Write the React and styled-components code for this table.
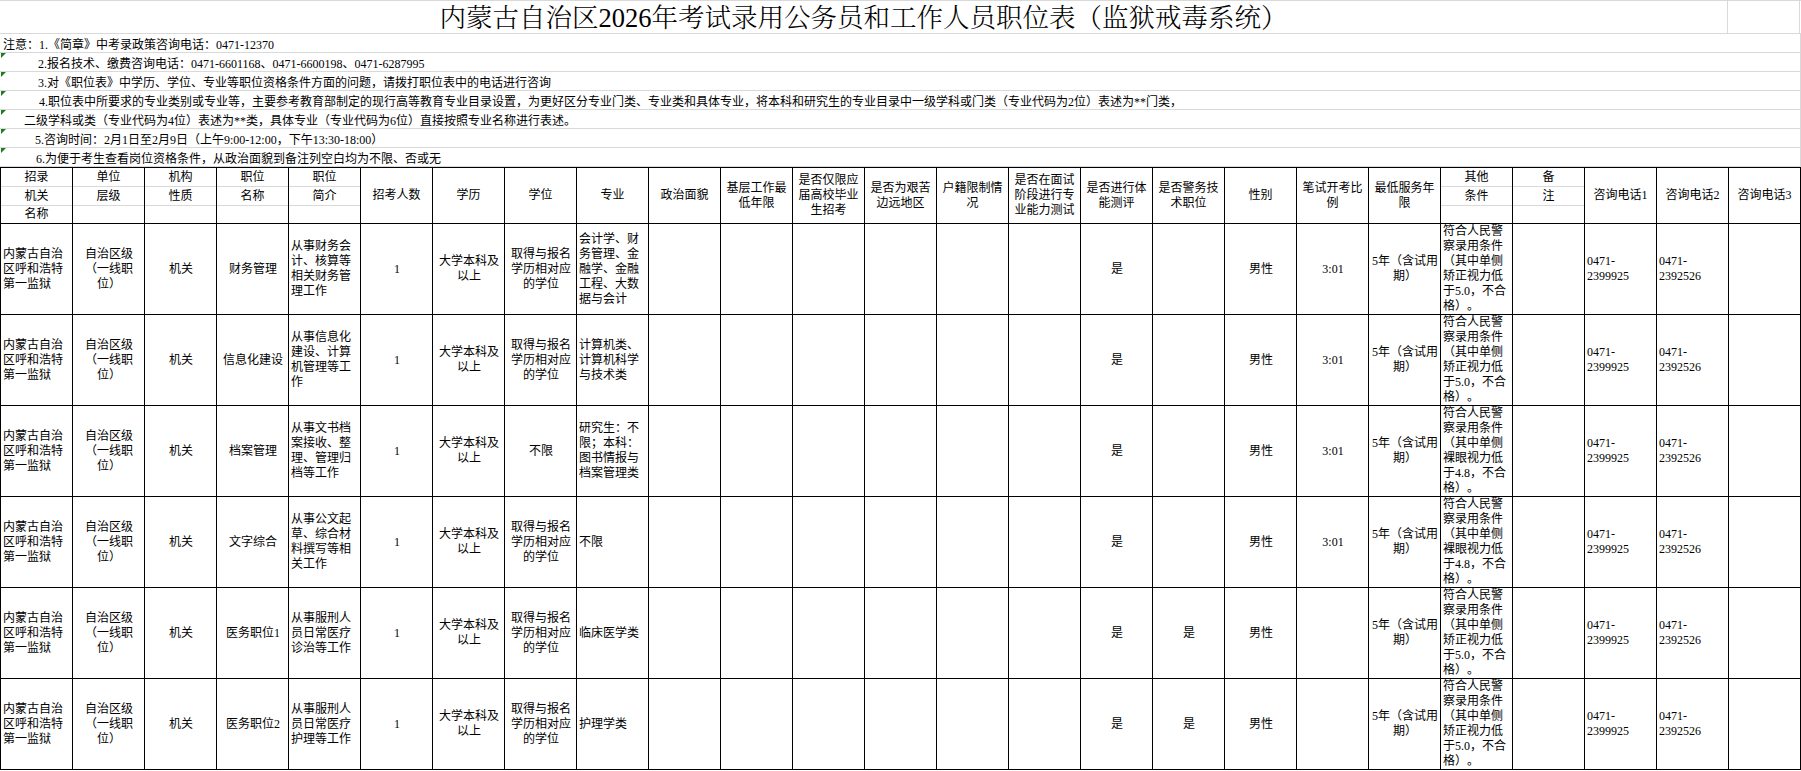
import React from "react";
import styled, { createGlobalStyle } from "styled-components";

const GlobalStyle = createGlobalStyle`
  html, body { margin: 0; padding: 0; background: #fff; }
  body {
    font-family: "Liberation Serif", "Noto Sans CJK SC", sans-serif;
    font-size: 12px;
    color: #000;
    text-autospace: no-autospace;
    text-spacing-trim: space-all;
  }
  * { box-sizing: border-box; }
`;

const GRID = "#d9d9d9";
const COL = 72;

const Sheet = styled.div`
  width: 1801px;
  display: flex;
  flex-direction: column;
`;

const TitleRow = styled.div`
  display: grid;
  grid-template-columns: ${COL * 24}px ${COL}px;
  height: 34px;
  border-top: 1px solid ${GRID};
  border-bottom: 1px solid ${GRID};
`;

const TitleCell = styled.div`
  display: flex;
  align-items: flex-end;
  justify-content: center;
  border-right: 1px solid ${GRID};
  font-family: "Liberation Serif", "Noto Serif CJK SC", "Noto Sans CJK SC", serif;
  font-size: 26.5px;
  font-weight: 300;
  line-height: 30px;
  white-space: nowrap;
`;

const NoteRow = styled.div`
  position: relative;
  display: flex;
  align-items: flex-end;
  height: 19px;
  padding-left: ${(p) => p.$indent}px;
  border-bottom: 1px solid ${GRID};
  border-right: 1px solid ${GRID};
  line-height: 13px;
  white-space: nowrap;

  &::before {
    content: "";
    display: ${(p) => (p.$flag ? "block" : "none")};
    position: absolute;
    top: 0;
    left: 1px;
    border-top: 5px solid #1e7b1e;
    border-right: 5px solid transparent;
  }
`;

const Table = styled.div`
  display: grid;
  grid-template-columns: repeat(25, ${COL}px);
  grid-template-rows: 56px repeat(6, 91px);
  border-left: 1px solid #000;
  border-top: 1px solid #000;
`;

const HeadCell = styled.div`
  display: flex;
  align-items: center;
  justify-content: center;
  text-align: center;
  padding: 0 2px;
  line-height: 15px;
  border-right: 1px solid #000;
  border-bottom: 1px solid #000;
`;

const HeadStack = styled.div`
  display: grid;
  grid-template-rows: 19px 19px 1fr;
  border-right: 1px solid #000;
  border-bottom: 1px solid #000;
`;

const HeadSub = styled.div`
  display: flex;
  align-items: center;
  justify-content: center;
  line-height: 15px;
  border-bottom: 1px solid ${GRID};
  &:last-child { border-bottom: none; }
`;

const Cell = styled.div`
  display: flex;
  flex-direction: column;
  justify-content: center;
  text-align: ${(p) => p.$align};
  padding: 0 1px 0 2px;
  line-height: 15px;
  overflow: hidden;
  border-right: 1px solid #000;
  border-bottom: 1px solid #000;
`;

const columns = [
  { head: ["招录", "机关", "名称"], align: "left" },
  { head: ["单位", "层级", ""], align: "center" },
  { head: ["机构", "性质", ""], align: "center" },
  { head: ["职位", "名称", ""], align: "center" },
  { head: ["职位", "简介", ""], align: "left" },
  { head: "招考人数", align: "center" },
  { head: "学历", align: "center" },
  { head: "学位", align: "center" },
  { head: "专业", align: "left" },
  { head: "政治面貌", align: "center" },
  { head: "基层工作最低年限", align: "center" },
  { head: "是否仅限应届高校毕业生招考", align: "center" },
  { head: "是否为艰苦边远地区", align: "center" },
  { head: "户籍限制情况", align: "center" },
  { head: "是否在面试阶段进行专业能力测试", align: "center" },
  { head: "是否进行体能测评", align: "center" },
  { head: "是否警务技术职位", align: "center" },
  { head: "性别", align: "center" },
  { head: "笔试开考比例", align: "center" },
  { head: "最低服务年限", align: "center" },
  { head: ["其他", "条件", ""], align: "left" },
  { head: ["备", "注", ""], align: "center" },
  { head: "咨询电话1", align: "left" },
  { head: "咨询电话2", align: "left" },
  { head: "咨询电话3", align: "left" },
];

const ORG = "内蒙古自治区呼和浩特第一监狱";
const LEVEL = "自治区级（一线职位）";
const DEGREE = "取得与报名学历相对应的学位";
const EDU = "大学本科及以上";
const TERM = "5年（含试用期）";
const COND_A = "符合人民警察录用条件（其中单侧矫正视力低于5.0，不合格）。";
const COND_B = "符合人民警察录用条件（其中单侧裸眼视力低于4.8，不合格）。";
const TEL1 = "0471-2399925";
const TEL2 = "0471-2392526";

const blanks = (n) => Array(n).fill("");

const rows = [
  [ORG, LEVEL, "机关", "财务管理", "从事财务会计、核算等相关财务管理工作", "1", EDU, DEGREE,
    "会计学、财务管理、金融学、金融工程、大数据与会计", ...blanks(6), "是", "", "男性", "3:01", TERM, COND_A, "", TEL1, TEL2, ""],
  [ORG, LEVEL, "机关", "信息化建设", "从事信息化建设、计算机管理等工作", "1", EDU, DEGREE,
    "计算机类、计算机科学与技术类", ...blanks(6), "是", "", "男性", "3:01", TERM, COND_A, "", TEL1, TEL2, ""],
  [ORG, LEVEL, "机关", "档案管理", "从事文书档案接收、整理、管理归档等工作", "1", EDU, "不限",
    "研究生：不限；本科：图书情报与档案管理类", ...blanks(6), "是", "", "男性", "3:01", TERM, COND_B, "", TEL1, TEL2, ""],
  [ORG, LEVEL, "机关", "文字综合", "从事公文起草、综合材料撰写等相关工作", "1", EDU, DEGREE,
    "不限", ...blanks(6), "是", "", "男性", "3:01", TERM, COND_B, "", TEL1, TEL2, ""],
  [ORG, LEVEL, "机关", "医务职位1", "从事服刑人员日常医疗诊治等工作", "1", EDU, DEGREE,
    "临床医学类", ...blanks(6), "是", "是", "男性", "", TERM, COND_A, "", TEL1, TEL2, ""],
  [ORG, LEVEL, "机关", "医务职位2", "从事服刑人员日常医疗护理等工作", "1", EDU, DEGREE,
    "护理学类", ...blanks(6), "是", "是", "男性", "", TERM, COND_A, "", TEL1, TEL2, ""],
];

const notes = [
  { indent: 3, flag: false, text: "注意：1.《简章》中考录政策咨询电话：0471-12370" },
  { indent: 38, flag: true, text: "2.报名技术、缴费咨询电话：0471-6601168、0471-6600198、0471-6287995" },
  { indent: 38, flag: true, text: "3.对《职位表》中学历、学位、专业等职位资格条件方面的问题，请拨打职位表中的电话进行咨询" },
  { indent: 39, flag: true, text: "4.职位表中所要求的专业类别或专业等，主要参考教育部制定的现行高等教育专业目录设置，为更好区分专业门类、专业类和具体专业，将本科和研究生的专业目录中一级学科或门类（专业代码为2位）表述为**门类，" },
  { indent: 24, flag: true, text: "二级学科或类（专业代码为4位）表述为**类，具体专业（专业代码为6位）直接按照专业名称进行表述。" },
  { indent: 35, flag: true, text: "5.咨询时间：2月1日至2月9日（上午9:00-12:00，下午13:30-18:00）" },
  { indent: 36, flag: true, text: "6.为便于考生查看岗位资格条件，从政治面貌到备注列空白均为不限、否或无" },
];

function CellText({ value }) {
  if (/^0471-\d+$/.test(value)) {
    const [a, b] = value.split("-");
    return (
      <span>
        {a}-<wbr />
        {b}
      </span>
    );
  }
  return <span>{value}</span>;
}

export default function App() {
  return (
    <>
      <GlobalStyle />
      <Sheet>
        <TitleRow>
          <TitleCell>内蒙古自治区2026年考试录用公务员和工作人员职位表（监狱戒毒系统）</TitleCell>
          <TitleCell />
        </TitleRow>
        {notes.map((n, i) => (
          <NoteRow key={i} $indent={n.indent} $flag={n.flag}>
            {n.text}
          </NoteRow>
        ))}
        <Table>
          {columns.map((c, i) =>
            Array.isArray(c.head) ? (
              <HeadStack key={`h${i}`}>
                {c.head.map((t, j) => (
                  <HeadSub key={j}>{t}</HeadSub>
                ))}
              </HeadStack>
            ) : (
              <HeadCell key={`h${i}`}>{c.head}</HeadCell>
            )
          )}
          {rows.map((r, ri) =>
            r.map((v, ci) => (
              <Cell key={`${ri}-${ci}`} $align={columns[ci].align}>
                <CellText value={v} />
              </Cell>
            ))
          )}
        </Table>
      </Sheet>
    </>
  );
}
